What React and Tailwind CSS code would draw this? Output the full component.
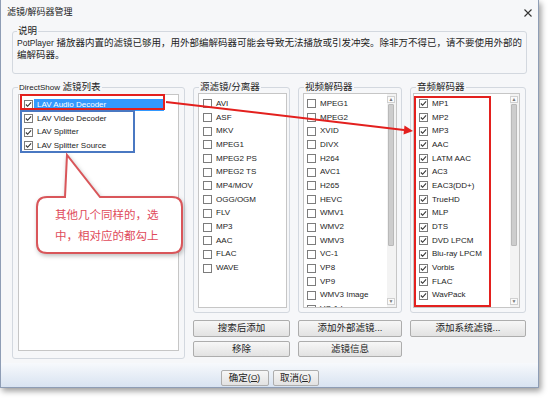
import React from "react";

const sources = ["AVI", "ASF", "MKV", "MPEG1", "MPEG2 PS", "MPEG2 TS", "MP4/MOV", "OGG/OGM", "FLV", "MP3", "AAC", "FLAC", "WAVE"];
const videos = ["MPEG1", "MPEG2", "XVID", "DIVX", "H264", "AVC1", "H265", "HEVC", "WMV1", "WMV2", "WMV3", "VC-1", "VP8", "VP9", "WMV3 Image", "VC-1 Image"];
const audios = ["MP1", "MP2", "MP3", "AAC", "LATM AAC", "AC3", "EAC3(DD+)", "TrueHD", "MLP", "DTS", "DVD LPCM", "Blu-ray LPCM", "Vorbis", "FLAC", "WavPack", "ALAC"];
const lav = ["LAV Video Decoder", "LAV Splitter", "LAV Splitter Source"];

function Check({ checked }) {
  return (
    <svg width="9" height="9" viewBox="0 0 9 9" className="shrink-0">
      <rect x="0.5" y="0.5" width="8" height="8" fill="#fff" stroke="#7c7c7c" />
      {checked && <path d="M1.9 4.5 L3.6 6.3 L7.1 2.4" fill="none" stroke="#333" strokeWidth="1.1" />}
    </svg>
  );
}

function Row({ label, checked }) {
  return (
    <div className="flex h-[13.7px] shrink-0 items-center gap-[4px] whitespace-nowrap text-[8px] text-[#1c1c1c]">
      <Check checked={checked} />
      <span>{label}</span>
    </div>
  );
}

function Scrollbar() {
  return (
    <div className="flex w-[9px] shrink-0 flex-col bg-[#f3f3f3] py-[2px] pr-[1px]">
      <div className="flex h-[7px] items-center justify-center border border-[#d0d0d0] bg-[#fafafa] text-[5px] leading-none text-[#777]">▲</div>
      <div className="mx-[1px] mt-[1px] h-[142px] rounded-[1px] border border-[#b9b9b9] bg-[#cdcdcd]" />
      <div className="flex-1" />
      <div className="flex h-[7px] items-center justify-center border border-[#d0d0d0] bg-[#fafafa] text-[5px] leading-none text-[#777]">▼</div>
    </div>
  );
}

function Group({ title, className, children }) {
  return (
    <fieldset className={`rounded-[3px] border border-[#d3d8df] px-0 ${className}`}>
      <legend className="ml-[5px] px-[1px] text-[9.5px] leading-[12px] text-[#222]">{title}</legend>
      {children}
    </fieldset>
  );
}

function Btn({ children, className }) {
  return (
    <div className={`flex items-center justify-center rounded-[2px] border border-[#adadad] bg-linear-to-b from-[#f7f7f7] to-[#e2e2e2] text-[9.5px] text-[#222] ${className}`}>
      {children}
    </div>
  );
}

export default function App() {
  return (
    <div className="relative h-[401px] w-[550px] overflow-hidden bg-white font-['Liberation_Sans','Noto_Sans_CJK_SC',sans-serif]">
      <div className="flex h-[388px] w-[539px] flex-col border-x border-b border-[#8e9db5] bg-[#f6f7f9] shadow-[2px_3px_6px_rgba(0,0,0,0.4)]">
        {/* title bar */}
        <div className="flex h-[25px] shrink-0 items-center justify-between pl-[6px] pr-[6px]">
          <span className="text-[9px] text-[#222]">滤镜/解码器管理</span>
          <svg width="8" height="8" viewBox="0 0 8 8">
            <path d="M0.5 0.5 L7.5 7.5 M7.5 0.5 L0.5 7.5" stroke="#333" strokeWidth="1.1" />
          </svg>
        </div>

        <div className="px-[11px]">
          <fieldset className="rounded-[3px] border border-[#d3d8df] pb-[12px] pl-[4px]">
            <legend className="px-[1px] text-[9.5px] leading-[12px] text-[#222]">说明</legend>
            <div className="whitespace-nowrap text-[9.5px] leading-[12px] text-[#1c1c1c]">
              <span className="text-[8.5px]">PotPlayer</span> 播放器内置的滤镜已够用，用外部编解码器可能会导致无法播放或引发冲突。除非万不得已，请不要使用外部的
            </div>
            <div className="text-[9.5px] leading-[12px] text-[#1c1c1c]">编解码器。</div>
          </fieldset>

          <div className="mt-[7px] flex gap-[8px]">
            <Group title={<><span className="text-[8px]">DirectShow</span> 滤镜列表</>} className="w-[173px] pb-[7px]">
              <div className="mx-[5px] h-[257px] border border-[#c6c6c6] bg-white pl-[5px] pt-[3px]">
                <div className="flex h-[13.7px] items-center whitespace-nowrap text-[8px]">
                  <Check checked />
                  <span className="ml-[1px] flex h-[12px] w-[130px] items-center bg-[#3399ff] pl-[3px] text-white">LAV Audio Decoder</span>
                </div>
                {lav.map((l) => (
                  <Row key={l} label={l} checked />
                ))}
              </div>
            </Group>

            <div className="flex w-[97px] flex-col">
              <Group title="源滤镜/分离器" className="pb-[4px]">
                <div className="ml-[4px] mr-[2px] flex h-[215px] flex-col overflow-hidden border border-[#c6c6c6] bg-white pl-[4px] pt-[3px]">
                  {sources.map((s) => (
                    <Row key={s} label={s} />
                  ))}
                </div>
              </Group>
              <Btn className="mt-[7px] h-[17px]">搜索后添加</Btn>
              <Btn className="mt-[4px] h-[16px]">移除</Btn>
            </div>

            <div className="flex w-[104px] flex-col">
              <Group title="视频解码器" className="pb-[4px]">
                <div className="mx-[4px] flex h-[215px] overflow-hidden border border-[#c6c6c6] bg-white">
                  <div className="flex flex-1 flex-col overflow-hidden pl-[3px] pt-[3px]">
                    {videos.map((s) => (
                      <Row key={s} label={s} />
                    ))}
                  </div>
                  <Scrollbar />
                </div>
              </Group>
              <Btn className="mt-[7px] h-[17px]">添加外部滤镜...</Btn>
              <Btn className="mt-[4px] h-[16px]">滤镜信息</Btn>
            </div>

            <div className="flex w-[116px] flex-col">
              <Group title="音频解码器" className="pb-[4px]">
                <div className="ml-[2px] mr-[5px] flex h-[215px] overflow-hidden border border-[#c6c6c6] bg-white">
                  <div className="flex flex-1 flex-col overflow-hidden pl-[5px] pt-[3px]">
                    {audios.map((s) => (
                      <Row key={s} label={s} checked />
                    ))}
                  </div>
                  <Scrollbar />
                </div>
              </Group>
              <Btn className="mt-[7px] h-[17px]">添加系统滤镜...</Btn>
            </div>
          </div>
        </div>

        {/* footer */}
        <div className="mt-[4px] flex flex-1 items-start justify-center gap-[4px] bg-linear-to-b from-[#f7f9fc] to-[#d8e3f1] pt-[7px]">
          <Btn className="h-[16px] w-[48px]">
            确定(<span className="text-[8px] underline">O</span>)
          </Btn>
          <Btn className="h-[16px] w-[46px]">
            取消(<span className="text-[8px] underline">C</span>)
          </Btn>
        </div>
      </div>

      {/* annotations */}
      <div className="absolute left-[20px] top-[94px] h-[16px] w-[145px] border-2 border-[#e3201e]" />
      <div className="absolute left-[20px] top-[110px] h-[43px] w-[115px] border-2 border-[#4a78c2]" />
      <div className="absolute left-[414px] top-[96px] h-[211px] w-[77px] border-2 border-[#e3201e]" />

      <svg className="pointer-events-none absolute left-0 top-0" width="550" height="401" viewBox="0 0 550 401">
        <line x1="166" y1="102" x2="404" y2="130" stroke="#e3201e" strokeWidth="2" />
        <polygon points="413,131 403.5,134.5 404.5,125.5" fill="#e3201e" />
        <path
          d="M47 197 L65 197 L67 155 L100 197 L172 197 Q182 197 182 207 L182 243 Q182 253 172 253 L47 253 Q37 253 37 243 L37 207 Q37 197 47 197 Z"
          fill="#fff"
          stroke="#d9565a"
          strokeWidth="2"
          style={{ filter: "drop-shadow(1px 2px 2px rgba(0,0,0,0.25))" }}
        />
      </svg>
      <div className="absolute left-[55px] top-[205px] text-[11.5px] leading-[21px] text-[#e04a5a]">
        <div>其他几个同样的，选</div>
        <div>中，相对应的都勾上</div>
      </div>
    </div>
  );
}
